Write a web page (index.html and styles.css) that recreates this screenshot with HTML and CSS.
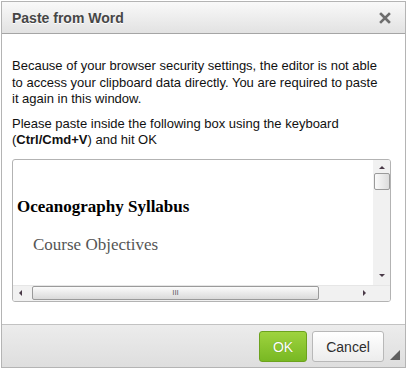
FILE: index.html
```html
<!DOCTYPE html>
<html>
<head>
<meta charset="utf-8">
<link rel="stylesheet" href="styles.css">
</head>
<body>
<div class="dialog">
  <div class="title">
    <span class="title-text">Paste from Word</span>
    <svg class="close" width="12" height="12" viewBox="0 0 12 12"><path d="M2 2 L10 10 M10 2 L2 10" stroke="#6e6e6e" stroke-width="2.6" stroke-linecap="square"/></svg>
  </div>
  <div class="content">
    <p class="msg">Because of your browser security settings, the editor is not able to access your clipboard data directly. You are required to paste it again in this window.</p>
    <p class="msg">Please paste inside the following box using the keyboard <span class="nowrap">(<b>Ctrl/Cmd+V</b>)</span> and hit OK</p>
    <div class="pastebox">
      <div class="main-row">
        <div class="doc">
          <div class="doc-h">Oceanography Syllabus</div>
          <div class="doc-sub">Course Objectives</div>
        </div>
        <div class="vscroll">
          <span class="arr up"></span>
          <span class="vthumb"></span>
          <span class="vtrack"></span>
          <span class="arr down"></span>
        </div>
      </div>
      <div class="hrow">
        <div class="hscroll">
          <span class="arr left"></span>
          <span class="hthumb"><span class="grip">III</span></span>
          <span class="htrack"></span>
          <span class="arr right"></span>
        </div>
        <div class="corner"></div>
      </div>
    </div>
  </div>
  <div class="footer">
    <button class="btn ok">OK</button>
    <button class="btn cancel">Cancel</button>
    <span class="resize"></span>
  </div>
</div>
</body>
</html>
```
FILE: styles.css
```css
html, body {
  margin: 0;
  padding: 0;
  background: #ffffff;
}
body {
  font-family: "Liberation Sans", Arial, sans-serif;
  width: 408px;
  height: 369px;
  overflow: hidden;
}
.dialog {
  margin: 1px 0 0 1px;
  width: 403px;
  height: 365px;
  border: 1px solid #b4b4b4;
  display: flex;
  flex-direction: column;
  background: #fff;
}
.title {
  height: 31px;
  border-bottom: 1px solid #a5a5a5;
  background: linear-gradient(#f9f9f9, #e2e2e2);
  display: flex;
  align-items: center;
  justify-content: space-between;
  padding: 0 14px 0 10px;
}
.title-text {
  font-weight: bold;
  font-size: 14px;
  color: #464646;
  text-shadow: 0 1px 0 #ffffff;
}
.close {
  display: block;
}
.content {
  flex: 1;
  padding: 24px 14px 0 10px;
}
.msg {
  margin: 0 0 8px 0;
  width: 372px;
  font-size: 13px;
  line-height: 16.5px;
  color: #111;
}
.msg b {
  font-weight: bold;
}
.nowrap {
  white-space: nowrap;
}
.pastebox {
  margin-top: 10px;
  width: 377px;
  height: 141px;
  border: 1px solid #b3b3b3;
  border-radius: 3px;
  display: flex;
  flex-direction: column;
  overflow: hidden;
}
.main-row {
  flex: 1;
  display: flex;
}
.doc {
  flex: 1;
  padding: 37px 0 0 4px;
  font-family: "Liberation Serif", "Times New Roman", serif;
}
.doc-h {
  font-weight: bold;
  font-size: 17px;
  color: #000;
}
.doc-sub {
  margin: 18px 0 0 16px;
  font-size: 17px;
  color: #555;
}
.vscroll {
  width: 17px;
  background: #f1f1f1;
  display: flex;
  flex-direction: column;
  align-items: center;
}
.vthumb {
  width: 14px;
  height: 15px;
  margin-top: 4px;
  border: 1px solid #9a9a9a;
  border-radius: 2px;
  background: linear-gradient(90deg, #fafafa, #dcdcdc);
}
.vtrack { flex: 1; }
.arr {
  width: 0;
  height: 0;
  display: block;
}
.up {
  margin-top: 6px;
  border-left: 3px solid transparent;
  border-right: 3px solid transparent;
  border-bottom: 3px solid #4a3a48;
}
.down {
  margin-bottom: 8px;
  border-left: 3px solid transparent;
  border-right: 3px solid transparent;
  border-top: 3px solid #4a3a48;
}
.hrow {
  height: 16px;
  display: flex;
}
.hscroll {
  flex: 1;
  border-top: 1px solid #e6e6e6;
  background: #f1f1f1;
  display: flex;
  align-items: center;
}
.left {
  margin-left: 6px;
  border-top: 3px solid transparent;
  border-bottom: 3px solid transparent;
  border-right: 3px solid #4a3a48;
}
.right {
  margin-right: 7px;
  border-top: 3px solid transparent;
  border-bottom: 3px solid transparent;
  border-left: 3px solid #4a3a48;
}
.hthumb {
  margin-left: 10px;
  width: 285px;
  height: 12px;
  border: 1px solid #9a9a9a;
  border-radius: 2px;
  background: linear-gradient(#fbfbfb, #dadada);
  display: flex;
  align-items: center;
  justify-content: center;
}
.grip {
  font-size: 8px;
  color: #666;
  line-height: 8px;
}
.htrack { flex: 1; }
.corner {
  width: 17px;
  background: #f1f1f1;
  border-top: 1px solid #e6e6e6;
}
.footer {
  border-top: 1px solid #c2c2c2;
  background: linear-gradient(#ececec, #dedede);
  display: flex;
  align-items: flex-start;
  justify-content: flex-end;
  padding: 6px 0 0 0;
  box-sizing: border-box;
  height: 43px;
  position: relative;
}
.btn {
  height: 31px;
  font-family: "Liberation Sans", Arial, sans-serif;
  font-size: 14px;
  border-radius: 3px;
  padding: 0;
  cursor: pointer;
}
.ok {
  width: 48px;
  color: #fff;
  background: linear-gradient(#9ed33e, #78b823);
  border: 1px solid #6ca21e;
  text-shadow: 0 0 1px #5b8f16;
}
.cancel {
  width: 72px;
  margin-left: 5px;
  margin-right: 21px;
  color: #2e2e2e;
  background: linear-gradient(#ffffff, #ececec);
  border: 1px solid #b8b8b8;
}
.resize {
  position: absolute;
  right: 5px;
  bottom: 7px;
  width: 0;
  height: 0;
  border-left: 10px solid transparent;
  border-bottom: 10px solid #5e5e5e;
}
```
